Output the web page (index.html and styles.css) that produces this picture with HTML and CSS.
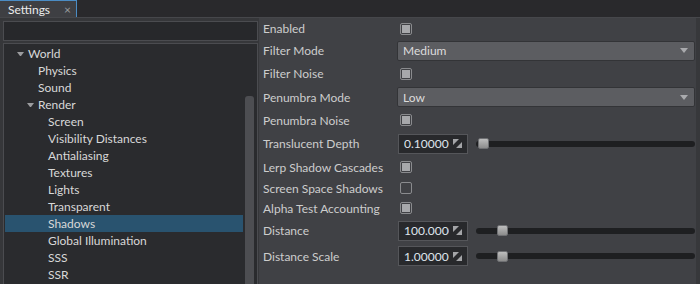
FILE: index.html
```html
<!DOCTYPE html>
<html lang="en">
<head>
  <meta charset="UTF-8">
  <title>Settings</title>
  <link rel="stylesheet" href="styles.css">
</head>
<body>

  <div class="tabbar">
    <div class="tab">Settings<span class="tab-close">&#215;</span></div>
  </div>

  <div class="main">
    <div class="side">
      <div class="search"></div>
      <div class="tree">
        <div class="tree-list">
          <div class="node lvl0"><span class="arrow open"></span>World</div>
          <div class="node lvl1"><span class="arrow"></span>Physics</div>
          <div class="node lvl1"><span class="arrow"></span>Sound</div>
          <div class="node lvl1"><span class="arrow open"></span>Render</div>
          <div class="node lvl2"><span class="arrow"></span>Screen</div>
          <div class="node lvl2"><span class="arrow"></span>Visibility Distances</div>
          <div class="node lvl2"><span class="arrow"></span>Antialiasing</div>
          <div class="node lvl2"><span class="arrow"></span>Textures</div>
          <div class="node lvl2"><span class="arrow"></span>Lights</div>
          <div class="node lvl2"><span class="arrow"></span>Transparent</div>
          <div class="node lvl2 selected"><span class="arrow"></span>Shadows</div>
          <div class="node lvl2"><span class="arrow"></span>Global Illumination</div>
          <div class="node lvl2"><span class="arrow"></span>SSS</div>
          <div class="node lvl2"><span class="arrow"></span>SSR</div>
        </div>
        <div class="scrollbar"><div class="scroll-thumb"></div></div>
      </div>
    </div>

    <div class="props">
      <div class="prop h21">
        <span class="prop-label">Enabled</span>
        <span class="check on"></span>
      </div>
      <div class="prop">
        <span class="prop-label">Filter Mode</span>
        <div class="combo">Medium<span class="combo-arrow"></span></div>
      </div>
      <div class="prop">
        <span class="prop-label">Filter Noise</span>
        <span class="check on"></span>
      </div>
      <div class="prop h24">
        <span class="prop-label">Penumbra Mode</span>
        <div class="combo">Low<span class="combo-arrow"></span></div>
      </div>
      <div class="prop h22">
        <span class="prop-label">Penumbra Noise</span>
        <span class="check on"></span>
      </div>
      <div class="prop h25">
        <span class="prop-label">Translucent Depth</span>
        <div class="spin">
          <span class="spin-value">0.10000</span>
          <svg class="spin-icon" width="9" height="9" viewBox="0 0 9 9"><path d="M0 0h6L0 6z M9 3v6H3z" fill="#a4a5a8"/></svg>
        </div>
        <div class="slider"><span class="slider-handle" style="margin-left: 2px"></span></div>
      </div>
      <div class="prop h22">
        <span class="prop-label">Lerp Shadow Cascades</span>
        <span class="check on"></span>
      </div>
      <div class="prop h20">
        <span class="prop-label">Screen Space Shadows</span>
        <span class="check"></span>
      </div>
      <div class="prop h20">
        <span class="prop-label">Alpha Test Accounting</span>
        <span class="check on"></span>
      </div>
      <div class="prop h25">
        <span class="prop-label">Distance</span>
        <div class="spin">
          <span class="spin-value">100.00000</span>
          <svg class="spin-icon" width="9" height="9" viewBox="0 0 9 9"><path d="M0 0h6L0 6z M9 3v6H3z" fill="#a4a5a8"/></svg>
        </div>
        <div class="slider"><span class="slider-handle" style="margin-left: 21px"></span></div>
      </div>
      <div class="prop h26">
        <span class="prop-label">Distance Scale</span>
        <div class="spin">
          <span class="spin-value">1.00000</span>
          <svg class="spin-icon" width="9" height="9" viewBox="0 0 9 9"><path d="M0 0h6L0 6z M9 3v6H3z" fill="#a4a5a8"/></svg>
        </div>
        <div class="slider"><span class="slider-handle" style="margin-left: 21px"></span></div>
      </div>
    </div>
  </div>

</body>
</html>
```

FILE: styles.css
```css
* {
  margin: 0;
  padding: 0;
  box-sizing: border-box;
}

body {
  width: 700px;
  height: 284px;
  overflow: hidden;
  background-color: #2a2b2e;
  font-family: Lato, "Noto Sans", sans-serif;
  color: #d6d6d6;
}

.tabbar {
  height: 18px;
  display: flex;
  background-color: #29292c;
  border-bottom: 1px solid #46474b;
}

.tab {
  width: 77px;
  height: 17px;
  display: flex;
  align-items: center;
  justify-content: space-between;
  padding: 0 5px 0 8px;
  background-color: #3e3f43;
  border-top: 1px solid #4b8cc4;
  border-right: 1px solid #4b8cc4;
  color: #ececec;
  font-size: 12px;
}

.tab-close {
  color: #9a9b9e;
  font-size: 12px;
}

.main {
  display: flex;
  height: 266px;
}

.side {
  width: 259px;
  display: flex;
  flex-direction: column;
  gap: 2px;
  padding: 3px 1px 0 3px;
  background-color: #36373a;
}

.search {
  height: 20px;
  background-color: #27282b;
  border: 1px solid #4b4c50;
}

.tree {
  flex: 1;
  display: flex;
  background-color: #2a2b2e;
  border: 1px solid #4b4c50;
  border-bottom: none;
}

.tree-list {
  flex: 1;
  padding: 1px 2px 0 1px;
}

.node {
  height: 17px;
  display: flex;
  align-items: center;
  font-size: 12px;
  color: #d8d8d8;
  white-space: nowrap;
}

.node.selected {
  background-color: #29536f;
}

.lvl0 {
  padding-left: 12px;
}

.lvl1 {
  padding-left: 22px;
}

.lvl2 {
  padding-left: 32px;
}

.arrow {
  width: 11px;
  height: 4px;
  flex-shrink: 0;
}

.arrow.open {
  width: 7px;
  margin-right: 4px;
  border-left: 3.5px solid transparent;
  border-right: 3.5px solid transparent;
  border-top: 4px solid #9b9c9f;
  height: 0;
}

.scrollbar {
  width: 12px;
  padding: 52px 3px 0 0;
}

.scroll-thumb {
  height: 100%;
  width: 9px;
  background-color: #4d4e52;
  border-radius: 3px 3px 0 0;
}

.props {
  flex: 1;
  display: flex;
  flex-direction: column;
  padding: 0 1px 0 4px;
  background-color: #404145;
  border-right: 4px solid #37383b;
}

.prop {
  height: 23px;
  display: flex;
  align-items: center;
  font-size: 12px;
  color: #cdcdcd;
}

.h20 { height: 20px; }
.h21 { height: 21px; }
.h22 { height: 22px; }
.h24 { height: 24px; }
.h25 { height: 25px; }
.h26 { height: 26px; }

.prop-label {
  width: 134px;
  flex-shrink: 0;
  white-space: nowrap;
}

.check {
  width: 12px;
  height: 12px;
  margin-left: 3px;
  padding: 1px;
  border: 1px solid #8a8b8e;
  border-radius: 2px;
  background-color: #404145;
}

.check.on::after {
  content: "";
  display: block;
  width: 8px;
  height: 8px;
  background-color: #a7a8ab;
}

.combo {
  flex: 1;
  height: 20px;
  display: flex;
  align-items: center;
  justify-content: space-between;
  padding: 0 6px 0 5px;
  background-color: #5c5d61;
  border: 1px solid #333437;
  border-radius: 2px;
  color: #dcdcdc;
  font-size: 12px;
}

.combo-arrow {
  width: 0;
  height: 0;
  border-left: 4px solid transparent;
  border-right: 4px solid transparent;
  border-top: 5px solid #a9aaad;
}

.spin {
  width: 70px;
  height: 20px;
  margin-left: 1px;
  display: flex;
  align-items: center;
  justify-content: space-between;
  padding: 0 5px 0 5px;
  background-color: #28292c;
  border: 1px solid #55565a;
  color: #dfe5ec;
  font-size: 12px;
  flex-shrink: 0;
}

.spin-value {
  width: 45px;
  overflow: hidden;
  white-space: nowrap;
}

.spin-icon {
  flex-shrink: 0;
}

.slider {
  flex: 1;
  height: 6px;
  margin-left: 8px;
  display: flex;
  align-items: center;
  background-color: #1e1f21;
  border-radius: 3px;
}

.slider-handle {
  width: 11px;
  height: 11px;
  border-radius: 2px;
  background: linear-gradient(#bdbdbd, #8c8c8c);
  border: 1px solid #6f7073;
}
```
